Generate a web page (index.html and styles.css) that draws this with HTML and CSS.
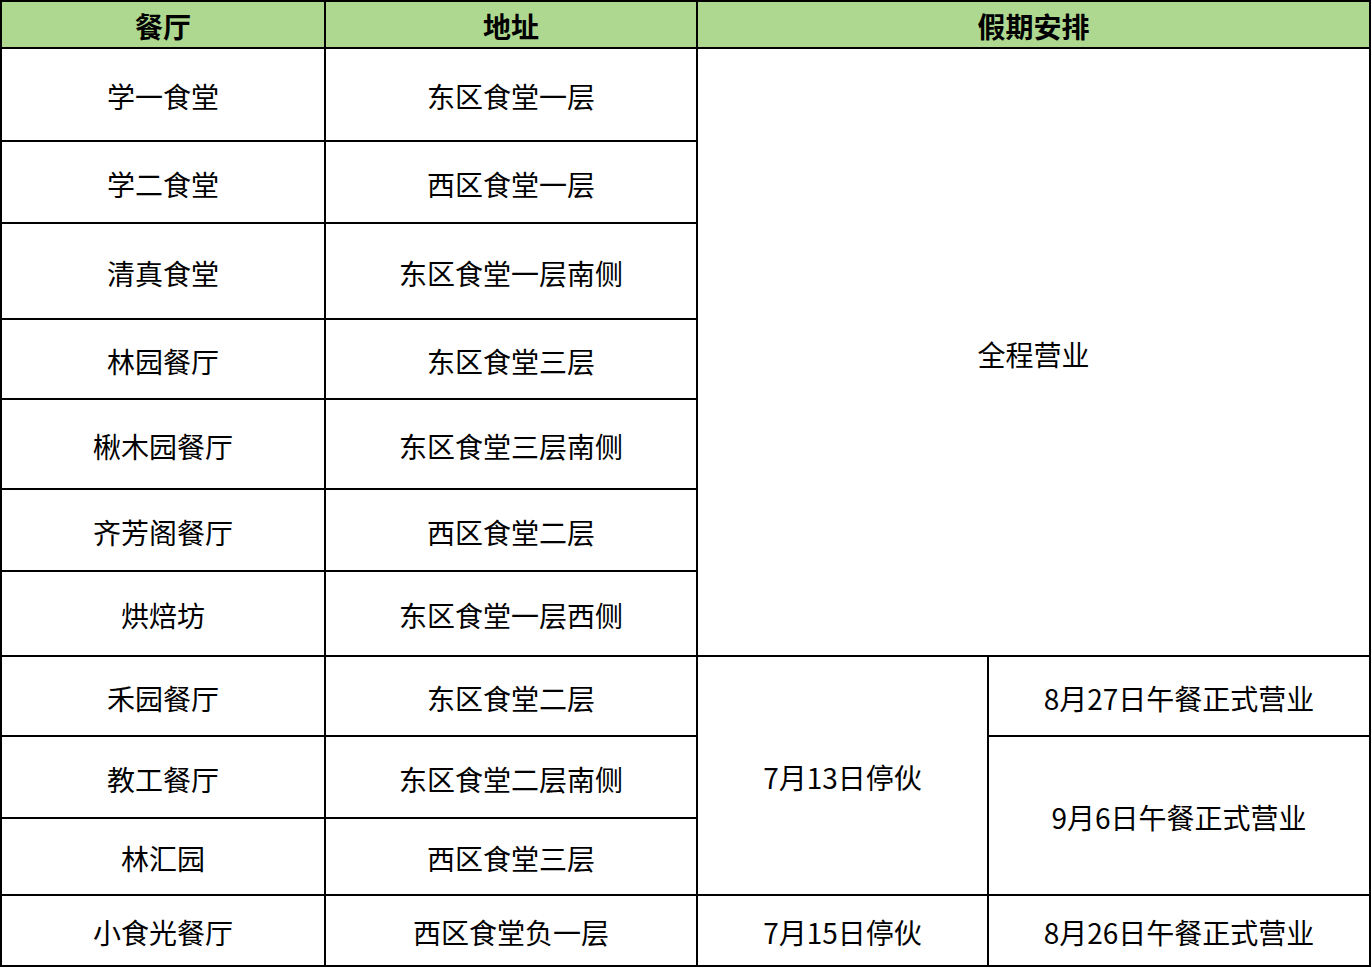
FILE: index.html
```html
<!DOCTYPE html>
<html lang="zh">
<head>
<meta charset="utf-8">
<title>假期安排</title>
<link rel="stylesheet" href="styles.css">
</head>
<body>
<table class="sched">
  <colgroup>
    <col class="c1"><col class="c2"><col class="c3"><col class="c4">
  </colgroup>
  <thead>
    <tr class="r0"><th>餐厅</th><th>地址</th><th colspan="2">假期安排</th></tr>
  </thead>
  <tbody>
    <tr class="r1"><td>学一食堂</td><td>东区食堂一层</td><td colspan="2" rowspan="7">全程营业</td></tr>
    <tr class="r2"><td>学二食堂</td><td>西区食堂一层</td></tr>
    <tr class="r3"><td>清真食堂</td><td>东区食堂一层南侧</td></tr>
    <tr class="r4"><td>林园餐厅</td><td>东区食堂三层</td></tr>
    <tr class="r5"><td>楸木园餐厅</td><td>东区食堂三层南侧</td></tr>
    <tr class="r6"><td>齐芳阁餐厅</td><td>西区食堂二层</td></tr>
    <tr class="r7"><td>烘焙坊</td><td>东区食堂一层西侧</td></tr>
    <tr class="r8"><td>禾园餐厅</td><td>东区食堂二层</td><td rowspan="3">7月13日停伙</td><td>8月27日午餐正式营业</td></tr>
    <tr class="r9"><td>教工餐厅</td><td>东区食堂二层南侧</td><td rowspan="2">9月6日午餐正式营业</td></tr>
    <tr class="r10"><td>林汇园</td><td>西区食堂三层</td></tr>
    <tr class="r11"><td>小食光餐厅</td><td>西区食堂负一层</td><td>7月15日停伙</td><td>8月26日午餐正式营业</td></tr>
  </tbody>
</table>
</body>
</html>
```
FILE: styles.css
```css
html, body {
  margin: 0;
  padding: 0;
  background: #ffffff;
}
body {
  font-family: "Noto Sans CJK SC", "Noto Sans", sans-serif;
  color: #000;
}
.sched {
  border-collapse: collapse;
  table-layout: fixed;
  width: 1371px;
}
.c1 { width: 324px; }
.c2 { width: 372px; }
.c3 { width: 291px; }
.c4 { width: 382px; }
.sched th, .sched td {
  border: 2px solid #000;
  padding: 0;
  text-align: center;
  vertical-align: middle;
  font-size: 28px;
  line-height: 1;
}
.sched th {
  background: #aed88f;
  font-weight: 700;
  padding-top: 3px;
}
.sched td {
  font-weight: 400;
  padding-top: 3px;
}
.r0 { height: 47px; }
.r1 { height: 93px; }
.r2 { height: 82px; }
.r3 { height: 96px; }
.r4 { height: 80px; }
.r5 { height: 90px; }
.r6 { height: 82px; }
.r7 { height: 85px; }
.r8 { height: 80px; }
.r9 { height: 82px; }
.r10 { height: 77px; }
.r11 { height: 71px; }
```
